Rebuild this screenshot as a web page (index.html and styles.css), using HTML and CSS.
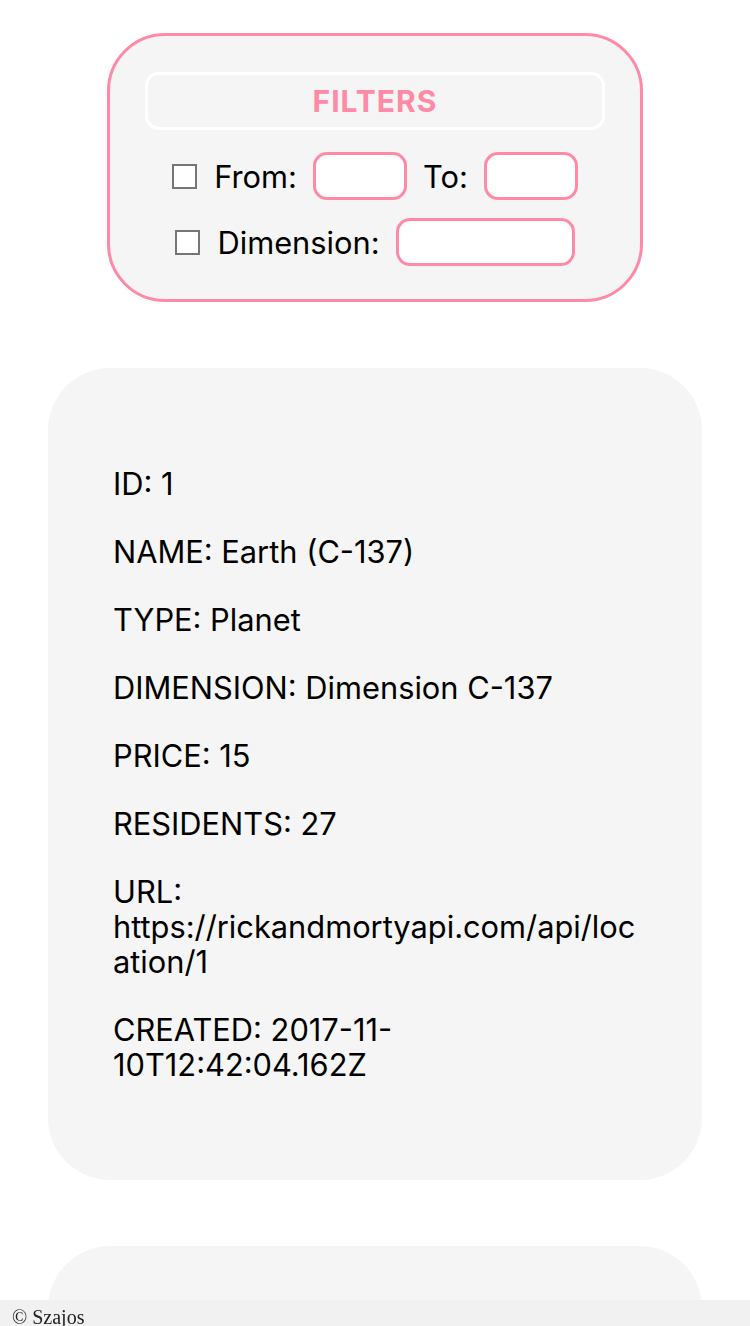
FILE: index.html
```html
<!DOCTYPE html>
<html>
<head>
<meta charset="utf-8">
<link rel="stylesheet" href="styles.css">
</head>
<body>
<main class="page">
  <section class="filters">
    <div class="filters-title">FILTERS</div>
    <div class="filter-row">
      <span class="check"></span>
      <label class="lbl">From:</label>
      <span class="field field-sm"></span>
      <label class="lbl">To:</label>
      <span class="field field-sm"></span>
    </div>
    <div class="filter-row">
      <span class="check"></span>
      <label class="lbl">Dimension:</label>
      <span class="field field-lg"></span>
    </div>
  </section>

  <article class="card">
    <p>ID: 1</p>
    <p>NAME: Earth (C-137)</p>
    <p>TYPE: Planet</p>
    <p>DIMENSION: Dimension C-137</p>
    <p>PRICE: 15</p>
    <p>RESIDENTS: 27</p>
    <p>URL: https://rickandmortyapi.com/api/location/1</p>
    <p>CREATED: 2017-11-10T12:42:04.162Z</p>
  </article>

  <article class="card">
    <p>ID: 2</p>
    <p>NAME: Abadango</p>
  </article>
</main>
<footer class="footer">© Szajos</footer>
</body>
</html>
```
FILE: styles.css
```css
html, body {
  margin: 0;
  padding: 0;
  background: #ffffff;
}
.page {
  display: flex;
  flex-direction: column;
  align-items: center;
  padding-top: 33px;
  font-family: Inter, Roboto, "Noto Sans", sans-serif;
  color: #000;
}
.filters {
  box-sizing: border-box;
  width: 536px;
  border: 3px solid #ff8aa6;
  border-radius: 58px;
  background: #f5f5f5;
  padding: 36px 35px 33px;
  display: flex;
  flex-direction: column;
  align-items: center;
}
.filters-title {
  box-sizing: border-box;
  width: 100%;
  height: 58px;
  border: 3px solid #ffffff;
  border-radius: 14px;
  display: flex;
  align-items: center;
  justify-content: center;
  color: #ff8aa6;
  font-weight: 700;
  font-size: 30px;
  letter-spacing: 1px;
}
.filter-row {
  display: flex;
  align-items: center;
  gap: 16px;
  margin-top: 22px;
  font-size: 30.8px;
}
.filter-row + .filter-row {
  margin-top: 18px;
}
.check {
  box-sizing: border-box;
  width: 25px;
  height: 25px;
  border: 2px solid #767676;
  background: #fff;
  margin-right: 1px;
}
.field {
  box-sizing: border-box;
  height: 48px;
  border: 3px solid #ff8aa6;
  border-radius: 14px;
  background: #fff;
}
.field-sm { width: 94px; }
.field-lg { width: 179px; }
.card {
  box-sizing: border-box;
  width: 654px;
  margin-top: 66px;
  background: #f5f5f5;
  border-radius: 62px;
  padding: 65px;
  font-size: 30.8px;
  line-height: 35px;
  overflow-wrap: anywhere;
}
.card p {
  margin: 33px 0;
}
.footer {
  position: fixed;
  left: 0;
  right: 0;
  bottom: 0;
  height: 22px;
  padding-top: 4px;
  background: rgba(240, 240, 240, 0.92);
  font-family: "Liberation Serif", serif;
  font-size: 20px;
  line-height: 26px;
  padding-left: 12px;
  color: #222;
  overflow: hidden;
}
```
